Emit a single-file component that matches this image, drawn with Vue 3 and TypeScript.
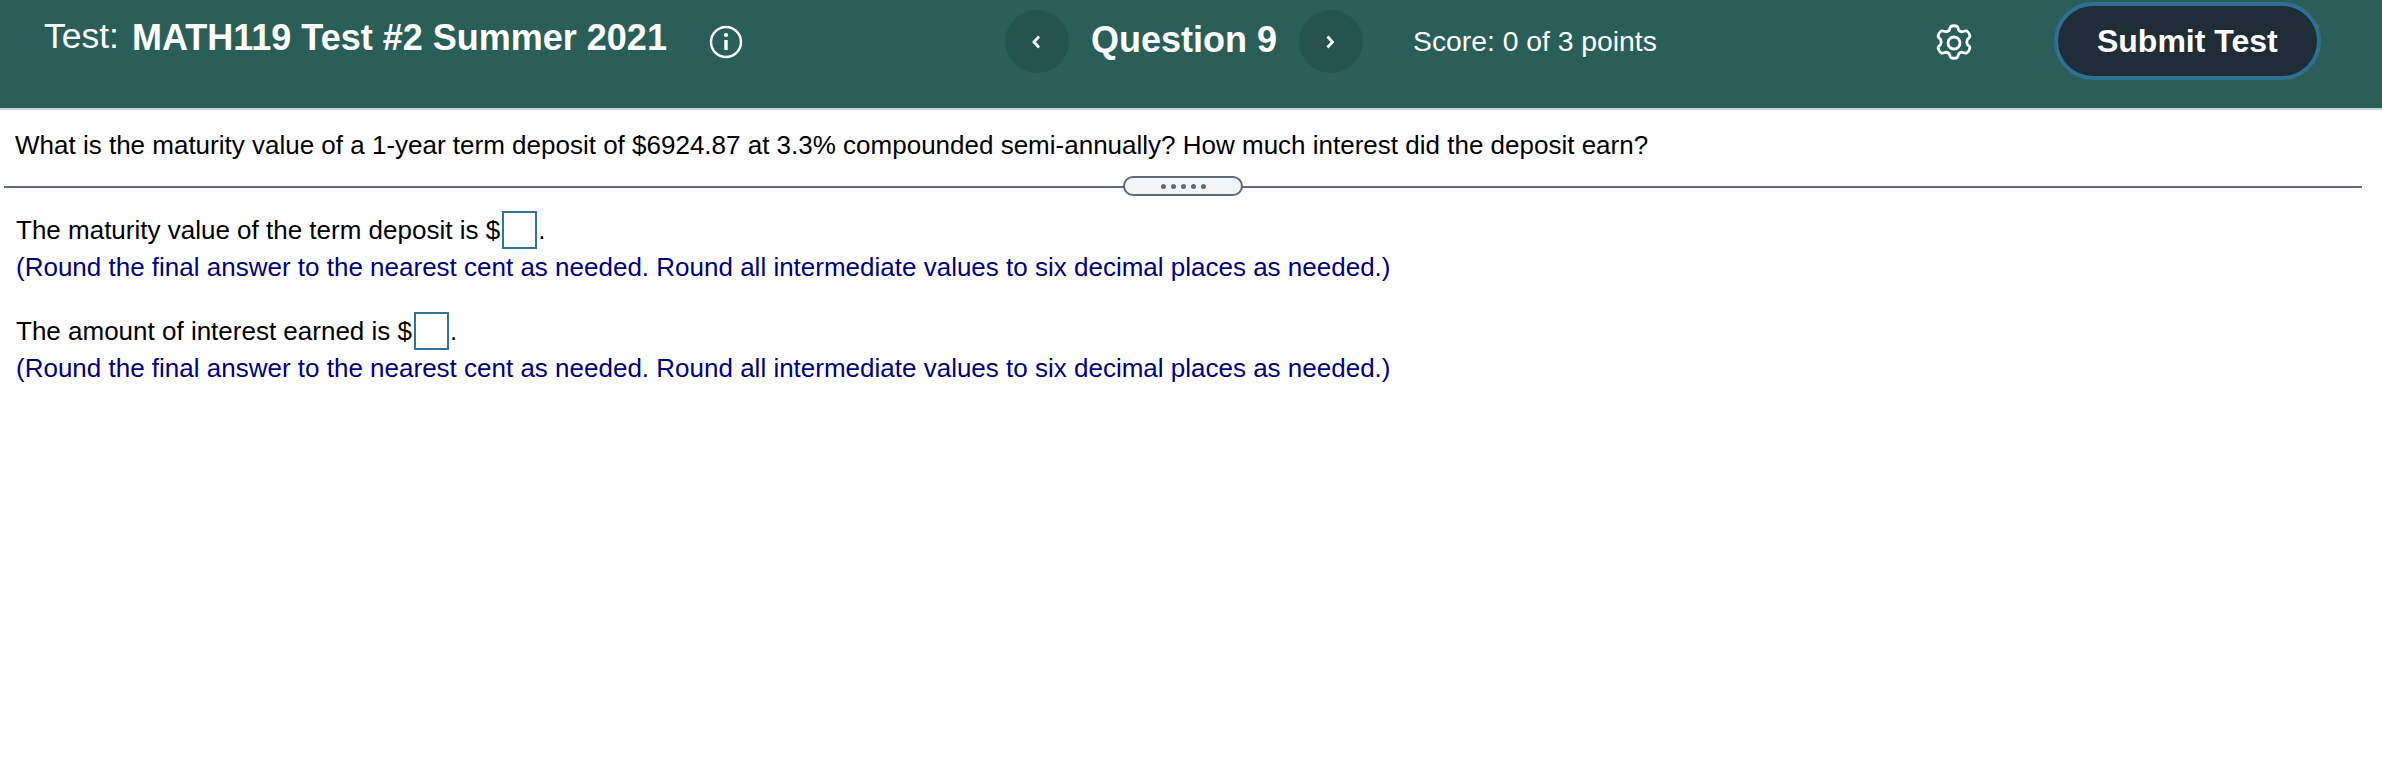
<script setup lang="ts">
const note = '(Round the final answer to the nearest cent as needed. Round all intermediate values to six decimal places as needed.)'
const parts = [
  { id: 1, label: 'The maturity value of the term deposit is $' },
  { id: 2, label: 'The amount of interest earned is $' },
]
</script>

<template>
  <div class="page">
    <header class="bar">
      <div class="title">
        <span class="test-label">Test:</span>
        <span class="test-name">MATH119 Test #2 Summer 2021</span>
      </div>
      <svg class="info" viewBox="0 0 34 34" width="34" height="34" fill="none" stroke="#fff">
        <circle cx="17" cy="17" r="15" stroke-width="2.4" />
        <path d="M17 15v10" stroke-width="3.4" />
        <circle cx="17" cy="10" r="2.1" fill="#fff" stroke="none" />
      </svg>
      <nav class="nav">
        <button class="round" aria-label="Previous">
          <svg viewBox="0 0 12 18" width="12" height="18" fill="none" stroke="#fff" stroke-width="2.8"><path d="M8 3.500 3 9l5 5.500" /></svg>
        </button>
        <span class="question">Question 9</span>
        <button class="round" aria-label="Next">
          <svg viewBox="0 0 12 18" width="12" height="18" fill="none" stroke="#fff" stroke-width="2.8"><path d="M2.500 3.500 7.500 9l-5 5.500" /></svg>
        </button>
      </nav>
      <span class="score">Score: 0 of 3 points</span>
      <svg class="gear" viewBox="0 0 36 38" width="36" height="38" fill="none" stroke="#fff" stroke-width="2.8" stroke-linejoin="round">
        <path d="M14.8 2.5c1.500-1 4.900-1 6.400 0 .9.800.9 2.800 1.600 3.700.9 1 2.500 1.700 3.700 1.500 1.300-.2 2.900-1.300 4.100-.8 1.600.9 3.300 3.800 3.300 5.600-.2 1.200-1.900 2.200-2.600 3.300-.6 1.200-.6 3.300 0 4.400.7 1.100 2.400 2.100 2.600 3.300 0 1.800-1.700 4.700-3.300 5.600-1.200.5-2.800-.6-4.100-.8-1.200-.2-2.800.5-3.700 1.500-.7.900-.7 2.900-1.600 3.700-1.500 1-4.900 1-6.400 0-.9-.8-.9-2.800-1.600-3.700-.9-1-2.500-1.700-3.700-1.500-1.300.2-2.900 1.300-4.100.8-1.600-.9-3.300-3.800-3.300-5.600.2-1.200 1.900-2.200 2.600-3.300.6-1.100.6-3.200 0-4.400-.7-1.100-2.400-2.100-2.600-3.300 0-1.800 1.700-4.700 3.300-5.600 1.200-.5 2.800.6 4.100.8 1.200.2 2.800-.5 3.700-1.500.7-.9.7-2.900 1.600-3.700z" />
        <circle cx="18" cy="19" r="6" />
      </svg>
      <button class="submit">Submit Test</button>
    </header>

    <p class="question-text">What is the maturity value of a 1-year term deposit of $6924.87 at 3.3% compounded semi-annually? How much interest did the deposit earn?</p>

    <div class="divider">
      <div class="pill"><i v-for="n in 5" :key="n"></i></div>
    </div>

    <section class="answers">
      <div v-for="p in parts" :key="p.id" class="part">
        <div class="line">{{ p.label }}<span class="box"></span>.</div>
        <div class="note">{{ note }}</div>
      </div>
    </section>
  </div>
</template>

<style>
html, body { margin: 0; background: #fff; }
</style>

<style scoped>
.page {
  width: 2382px;
  height: 764px;
  overflow: hidden;
  background: #fff;
  font-family: "Liberation Sans", Arial, sans-serif;
  color: #000;
}
.bar {
  box-sizing: border-box;
  height: 110px;
  background: #2a5f59;
  border-bottom: 2px solid #c9d2da;
  display: flex;
  align-items: flex-start;
  padding-left: 44px;
  color: #fff;
}
.title {
  width: 623px;
  margin-top: 16px;
  white-space: nowrap;
}
.test-label { font-size: 35.500px; margin-right: 13px; vertical-align: 2px; }
.test-name { font-size: 36px; font-weight: 700; }
.info { margin-left: 42px; margin-top: 25px; }
.nav {
  margin-left: 262px;
  margin-top: 10px;
  display: flex;
  align-items: center;
  gap: 22px;
}
.round {
  width: 64px;
  height: 63px;
  border: 0;
  padding: 0;
  border-radius: 50%;
  background: #255450;
  display: flex;
  align-items: center;
  justify-content: center;
}
.question { font-size: 36px; font-weight: 700; white-space: nowrap; margin-bottom: 4px; }
.score { margin-left: 50px; margin-top: 25px; font-size: 28.300px; white-space: nowrap; }
.gear { margin-left: 279px; margin-top: 24px; }
.submit {
  box-sizing: border-box;
  margin-left: 82px;
  margin-top: 2px;
  width: 267px;
  height: 78px;
  border: 4px solid #2f6f94;
  border-radius: 39px;
  background: #1f2d36;
  color: #fff;
  font: 700 32px "Liberation Sans", Arial, sans-serif;
}
.question-text {
  margin: 17px 0 0 15px;
  font-size: 26px;
  line-height: 36px;
  white-space: nowrap;
}
.divider {
  margin: 13px 20px 0 4px;
  height: 20px;
  position: relative;
}
.divider::before {
  content: "";
  position: absolute;
  left: 0;
  right: 0;
  top: 10px;
  height: 2px;
  background: #5f6c78;
}
.pill {
  box-sizing: border-box;
  position: absolute;
  left: 1119px;
  top: 0;
  width: 120px;
  height: 20px;
  border: 2px solid #5f6c78;
  border-radius: 10px;
  background: #f3f5f7;
  display: flex;
  align-items: center;
  justify-content: center;
  gap: 5px;
}
.pill i { width: 5px; height: 5px; border-radius: 50%; background: #5f6c78; }
.answers { margin: 14px 0 0 16px; }
.part { margin-bottom: 26px; }
.line { font-size: 26px; line-height: 40px; height: 39px; display: flex; align-items: center; white-space: pre; }
.box {
  box-sizing: border-box;
  width: 35px;
  height: 38px;
  border: 2px solid #2f7596;
  background: #fff;
  margin-left: 2px;
  margin-right: 1px;
}
.note { font-size: 26px; line-height: 36px; color: #00007f; white-space: nowrap; }
</style>
